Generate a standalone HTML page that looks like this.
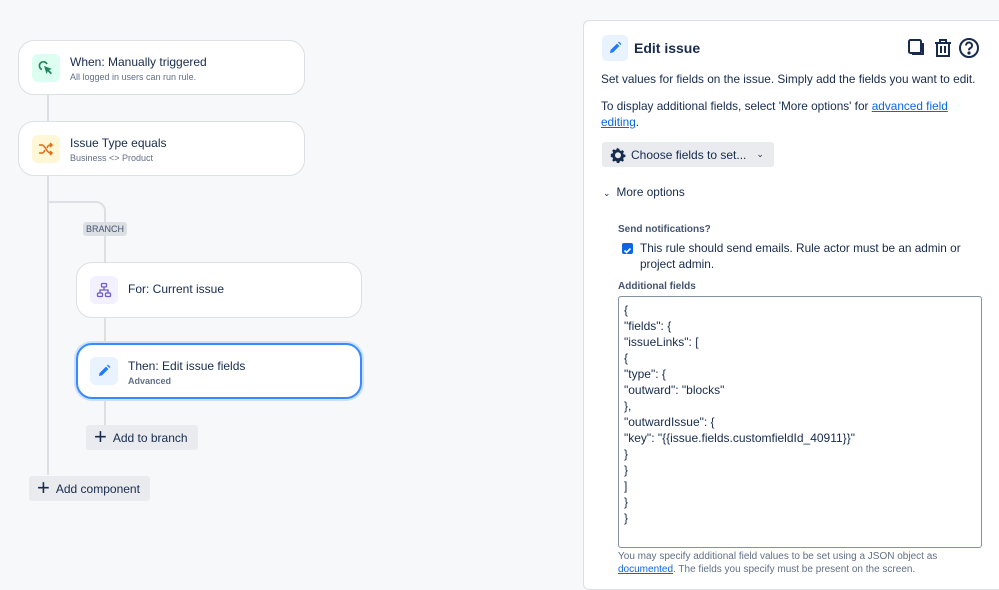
<!DOCTYPE html>
<html><head><meta charset="utf-8"><style>
*{box-sizing:border-box;margin:0;padding:0}
body{width:999px;height:576px;overflow:hidden;background:#f7f8f9;font-family:"Liberation Sans",sans-serif;color:#172b4d;position:relative}
.a{position:absolute}
.card{position:absolute;background:#fff;border:1px solid #dcdfe4;border-radius:16px}
.ic{position:absolute;left:13px;top:13px;width:28px;height:28px;border-radius:6px;display:flex;align-items:center;justify-content:center}
.t{position:absolute;left:51px;font-size:12px;color:#172b4d}
.s{position:absolute;left:51px;font-size:9px;color:#626f86}
.line{position:absolute;background:#dcdfe4}
.btn{position:absolute;background:#e9ebee;border-radius:3px;font-size:12px;display:flex;align-items:center;color:#172b4d}
.p{position:absolute;font-size:11.8px;color:#172b4d}
a{color:#0c66e4}
.code div{height:16px;line-height:16px}
.plus{font-size:22px;font-weight:300;margin-right:6px;line-height:1;margin-top:-2px}
</style></head><body>
<div class="line" style="left:47px;top:94px;width:2px;height:27px"></div>
<div class="line" style="left:47px;top:175px;width:2px;height:300px"></div>
<div class="a" style="left:48px;top:201px;width:58px;height:30px;border-top:2px solid #dcdfe4;border-right:2px solid #dcdfe4;border-top-right-radius:10px"></div>
<div class="line" style="left:104px;top:230px;width:2px;height:33px"></div>
<div class="line" style="left:104px;top:317px;width:2px;height:27px"></div>
<div class="line" style="left:104px;top:399px;width:2px;height:26px"></div>

<div class="card" style="left:18px;top:40px;width:287px;height:55px">
 <div class="ic" style="background:#dcfff1"><svg width="16" height="16" viewBox="0 0 16 16"><path d="M4 9.5A4 4 0 1 1 9 4" fill="none" stroke="#1f845a" stroke-width="1.6"/><path d="M6 6l8 3-3 1 3 3-1.3 1.3-3-3-1 3z" fill="#1f845a"/></svg></div>
 <div class="t" style="top:14px">When: Manually triggered</div>
 <div class="s" style="top:31px">All logged in users can run rule.</div>
</div>
<div class="card" style="left:18px;top:121px;width:287px;height:55px">
 <div class="ic" style="background:#fff7d6"><svg width="16" height="16" viewBox="0 0 16 16" fill="none" stroke="#e56910" stroke-width="1.5"><path d="M1 4h3c3 0 5 8 8 8h2M1 12h3c1.5 0 2.5-2 3-3M9 7c.5-1.5 1.5-3 3-3h2M12 2l2 2-2 2M12 10l2 2-2 2"/></svg></div>
 <div class="t" style="top:14px">Issue Type equals</div>
 <div class="s" style="top:31px">Business &lt;&gt; Product</div>
</div>
<div class="a" style="left:83px;top:222px;width:44px;height:14px;background:#dcdfe4;border-radius:3px;font-size:9px;color:#44546f;text-align:center;line-height:14px">BRANCH</div>
<div class="card" style="left:76px;top:262px;width:286px;height:56px">
 <div class="ic" style="background:#f3f0ff"><svg width="16" height="16" viewBox="0 0 16 16" fill="none" stroke="#6e5dc6" stroke-width="1.3"><rect x="5.5" y="1.5" width="5" height="3.5" rx="1"/><rect x="1.5" y="11" width="5" height="3.5" rx="1"/><rect x="9.5" y="11" width="5" height="3.5" rx="1"/><path d="M8 5v3M4 11V8h8v3"/></svg></div>
 <div class="t" style="top:19px">For: Current issue</div>
</div>
<div class="card" style="left:76px;top:343px;width:286px;height:56px;border:2px solid #388bff;box-shadow:0 0 0 2px #cce0ff">
 <div class="ic" style="background:#e9f2ff;left:12px;top:12px"><svg width="16" height="16" viewBox="0 0 16 16"><path d="M3 13l.6-3L10 3.6l2.4 2.4L6 12.4z M11 2.6l1-1 2.4 2.4-1 1z" fill="#1d7afc"/></svg></div>
 <div class="t" style="top:14px;left:50px">Then: Edit issue fields</div>
 <div class="s" style="top:31px;left:50px;font-weight:bold">Advanced</div>
</div>
<div class="btn" style="left:86px;top:425px;width:112px;height:25px;padding-left:8px"><span class="plus">+</span>Add to branch</div>
<div class="btn" style="left:29px;top:476px;width:121px;height:25px;padding-left:8px"><span class="plus">+</span>Add component</div>

<div class="a" style="left:583px;top:20px;width:430px;height:570px;background:#fff;border:1px solid #dcdfe4;border-radius:6px"></div>
<div class="a" style="left:602px;top:35px;width:26px;height:26px;background:#e9f2ff;border-radius:5px;display:flex;align-items:center;justify-content:center"><svg width="16" height="16" viewBox="0 0 16 16"><path d="M3 13l.6-3L10 3.6l2.4 2.4L6 12.4z M11 2.6l1-1 2.4 2.4-1 1z" fill="#1d7afc"/></svg></div>
<div class="p" style="left:634px;top:40px;font-size:14px;font-weight:bold">Edit issue</div>
<svg class="a" style="left:907px;top:37px" width="74" height="22" viewBox="0 0 74 22" fill="none" stroke="#172b4d" stroke-width="2"><rect x="2" y="3" width="12" height="13" rx="1.5"/><path d="M16 6v11h-11"/><path d="M28 6h16M33 6V3h6v3M30 6v13h12V6M34 9v7M38 9v7"/><circle cx="62" cy="11" r="9"/><path d="M59 8.5a3 3 0 1 1 4 2.8c-1 .5-1 1-1 2" /><circle cx="62" cy="16" r=".6" fill="#172b4d"/></svg>
<div class="p" style="left:601px;top:72px">Set values for fields on the issue. Simply add the fields you want to edit.</div>
<div class="p" style="left:601px;top:98px;line-height:16px;width:370px">To display additional fields, select 'More options' for <a href="#">advanced field editing</a>.</div>
<div class="btn" style="left:602px;top:142px;width:172px;height:25px;padding-left:8px"><svg width="16" height="16" viewBox="0 0 16 16" style="margin-right:5px"><path d="M8 1.5l1.3.2.4 1.7 1.3.6 1.5-.9 1.5 1.5-.9 1.5.6 1.3 1.7.4v2.2l-1.7.4-.6 1.3.9 1.5-1.5 1.5-1.5-.9-1.3.6-.4 1.7H6.9l-.4-1.7-1.3-.6-1.5.9-1.5-1.5.9-1.5-.6-1.3-1.7-.4V6.9l1.7-.4.6-1.3-.9-1.5 1.5-1.5 1.5.9 1.3-.6.4-1.7z" fill="#172b4d"/><circle cx="8" cy="8.2" r="3" fill="#e9ebee"/></svg>Choose fields to set...<span style="margin-left:10px;font-size:9px">&#8964;</span></div>
<div class="p" style="left:603px;top:185px"><span style="font-size:9px;margin-right:6px">&#8964;</span>More options</div>
<div class="p" style="left:618px;top:224px;font-size:10px;font-weight:bold;color:#44546f">Send notifications?</div>
<div class="a" style="left:622px;top:243px;width:11px;height:11px;background:#0c66e4;border-radius:2px"><svg width="11" height="11" viewBox="0 0 11 11"><path d="M2.5 5.5l2 2 4-4" stroke="#fff" stroke-width="1.6" fill="none"/></svg></div>
<div class="p" style="left:640px;top:240px;line-height:16px;width:340px">This rule should send emails. Rule actor must be an admin or project admin.</div>
<div class="p" style="left:618px;top:281px;font-size:10px;font-weight:bold;color:#44546f">Additional fields</div>
<div class="a code" style="left:618px;top:296px;width:364px;height:252px;border:1px solid #8590a2;border-radius:3px;padding:5px 0 0 5px;font-size:12px">
<div>{</div><div>"fields": {</div><div>"issueLinks": [</div><div>{</div><div>"type": {</div><div>"outward": "blocks"</div><div>},</div><div>"outwardIssue": {</div><div>"key": "{{issue.fields.customfieldId_40911}}"</div><div>}</div><div>}</div><div>]</div><div>}</div><div>}</div>
</div>
<div class="p" style="left:618px;top:550px;font-size:10px;line-height:13px;color:#626f86;width:360px">You may specify additional field values to be set using a JSON object as <a href="#">documented</a>. The fields you specify must be present on the screen.</div>
</body></html>
